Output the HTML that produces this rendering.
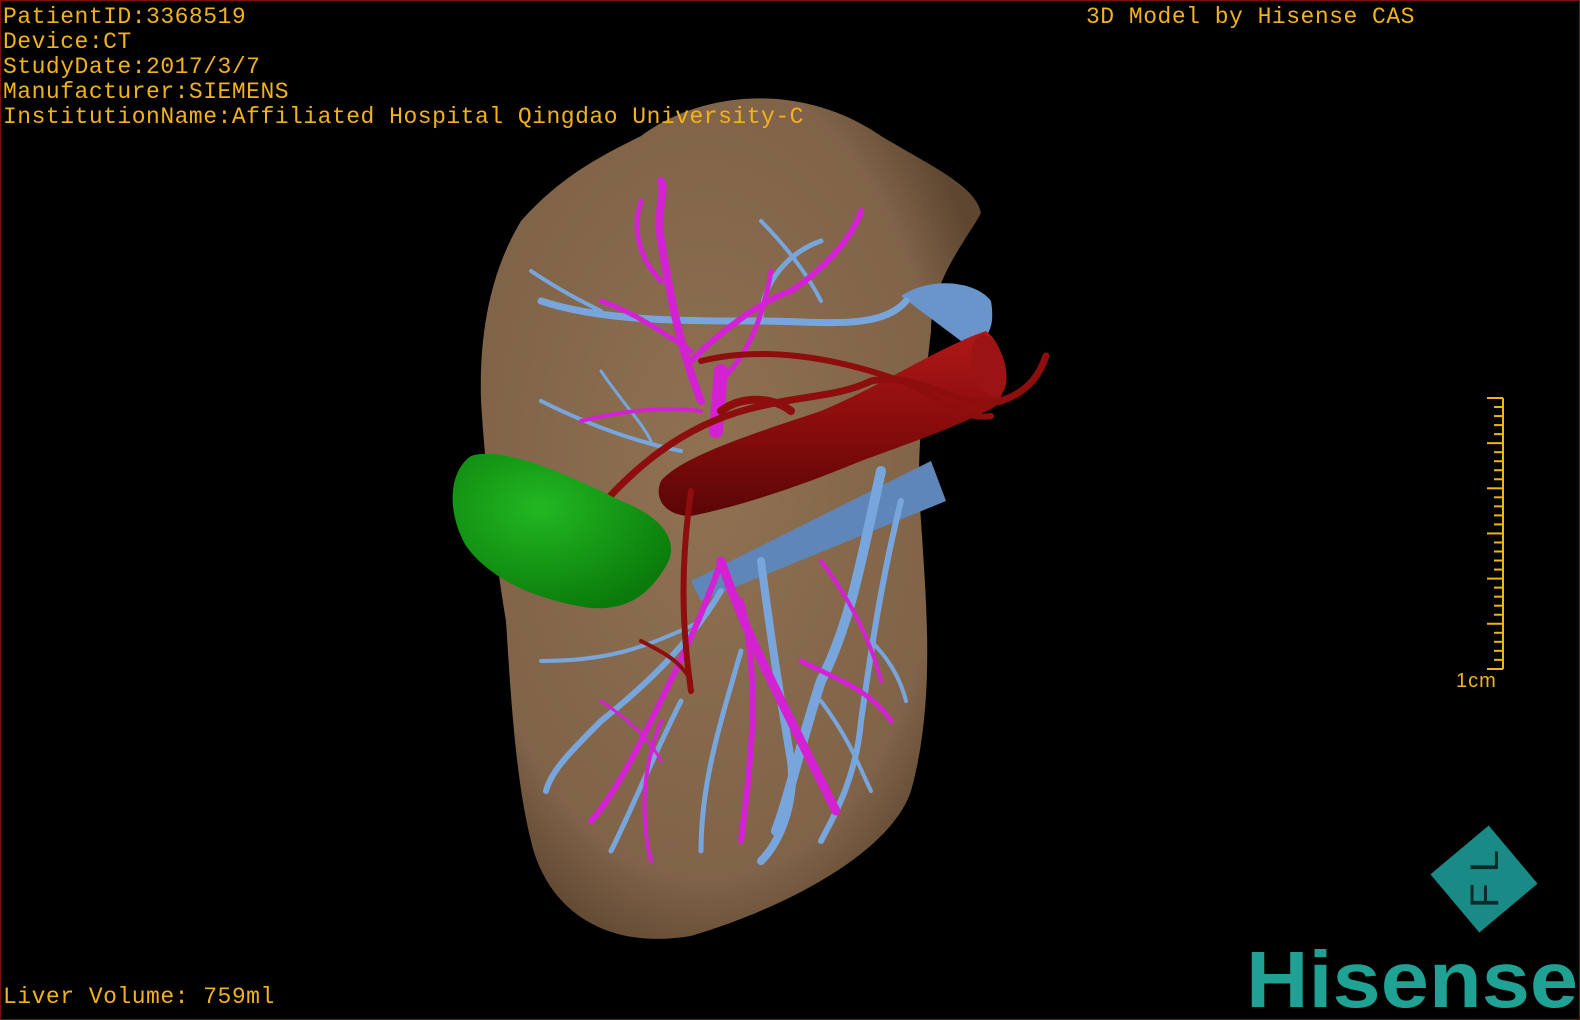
<!DOCTYPE html>
<html><head><meta charset="utf-8"><style>
html,body{margin:0;padding:0;background:#000;}
#f{position:relative;width:1580px;height:1020px;background:#000;overflow:hidden;box-sizing:border-box;border:1px solid #7a1010;}
.t{position:absolute;color:#f2b21c;font-family:"Liberation Mono",monospace;font-size:23px;line-height:25px;white-space:pre;letter-spacing:0.5px;}
</style></head><body><div id="f">
<svg width="1580" height="1020" style="position:absolute;left:0;top:0">
<defs>
<radialGradient id="lv" cx="0.45" cy="0.45" r="0.6"><stop offset="0" stop-color="#8f7252"/><stop offset="0.8" stop-color="#806348"/><stop offset="1" stop-color="#5e4630"/></radialGradient>
<linearGradient id="ivc" x1="0" y1="0" x2="0" y2="1"><stop offset="0" stop-color="#b01818"/><stop offset="0.5" stop-color="#8a0c0c"/><stop offset="1" stop-color="#5a0606"/></linearGradient>
<radialGradient id="gb" cx="0.4" cy="0.35" r="0.7"><stop offset="0" stop-color="#22b822"/><stop offset="1" stop-color="#0a7a0a"/></radialGradient>
</defs>
<path d="M640 135 C700 90 800 80 880 135 C930 165 975 185 980 212 C965 240 930 280 930 330 C920 420 915 460 920 520 C925 600 935 700 910 790 C890 850 790 905 690 935 C600 950 545 905 530 840 C515 780 510 700 505 620 C495 560 485 480 480 400 C478 330 490 270 520 220 C560 175 600 155 640 135 Z" fill="url(#lv)"/>
<path d="M690 580 L930 460 L945 500 L700 600 Z" fill="#5f86b8"/>
<path d="M900 295 C930 275 975 280 990 300 C995 330 985 345 960 340 Z" fill="#6a94cc"/>
<g fill="none" stroke="#78a6dc" stroke-linecap="round">
<path d="M540 300 C600 320 680 320 760 320 C820 320 880 330 905 300" stroke-width="7"/>
<path d="M760 320 C760 280 790 250 820 240" stroke-width="5"/>
<path d="M760 220 C790 250 810 280 820 300" stroke-width="4"/>
<path d="M530 270 C560 290 580 300 600 310" stroke-width="4"/>
<path d="M540 400 C580 420 630 440 680 450" stroke-width="4"/>
<path d="M600 370 C620 400 640 420 650 440" stroke-width="3"/>
<path d="M880 470 C860 560 850 620 820 680 C800 740 790 790 775 830" stroke-width="10"/>
<path d="M900 500 C880 580 870 650 860 720 C855 780 830 820 820 840" stroke-width="6"/>
<path d="M760 560 C770 640 780 700 790 760 C795 800 780 840 760 860" stroke-width="8"/>
<path d="M720 590 C690 640 650 680 600 720 C570 750 550 770 545 790" stroke-width="6"/>
<path d="M700 620 C640 650 600 660 540 660" stroke-width="4"/>
<path d="M680 700 C650 760 630 810 610 850" stroke-width="5"/>
<path d="M740 650 C720 720 700 780 700 850" stroke-width="5"/>
<path d="M870 640 C890 660 900 680 905 700" stroke-width="4"/>
<path d="M820 700 C850 740 860 770 870 790" stroke-width="4"/>
</g>
<g fill="none" stroke="#d421d4" stroke-linecap="round">
<path d="M700 400 C680 350 670 300 660 240 C655 210 665 190 660 180" stroke-width="8"/>
<path d="M660 280 C640 260 630 230 640 200" stroke-width="5"/>
<path d="M690 360 C720 330 760 300 790 290 C820 270 850 240 860 210" stroke-width="6"/>
<path d="M600 300 C630 310 660 330 690 350" stroke-width="5"/>
<path d="M720 380 C740 360 760 330 770 270" stroke-width="5"/>
<path d="M720 370 L715 430" stroke-width="14"/>
<path d="M580 420 C620 410 660 405 700 410" stroke-width="4"/>
<path d="M720 560 C740 620 770 680 800 740 C820 780 830 800 835 810" stroke-width="9"/>
<path d="M720 560 C700 620 670 680 640 740 C620 780 600 810 590 820" stroke-width="6"/>
<path d="M740 600 C760 680 750 760 740 840" stroke-width="6"/>
<path d="M800 660 C840 680 870 690 890 720" stroke-width="5"/>
<path d="M820 560 C850 600 870 640 880 680" stroke-width="4"/>
<path d="M660 720 C640 770 640 820 650 860" stroke-width="4"/>
<path d="M600 700 C630 720 650 740 660 760" stroke-width="3"/>
</g>
<path d="M660 480 C680 455 760 430 820 410 C880 385 940 345 985 330 C1005 345 1010 385 995 405 C960 425 900 445 860 460 C800 485 740 505 690 515 C665 515 652 498 660 480 Z" fill="url(#ivc)"/>
<ellipse cx="988" cy="365" rx="16" ry="32" fill="#9a1414" transform="rotate(-15 988 365)"/>
<g fill="none" stroke="#8e0e0e" stroke-linecap="round">
<path d="M600 505 C640 460 690 420 760 405 C800 395 840 395 870 380 C920 370 960 410 1000 400 C1030 390 1040 370 1045 355" stroke-width="7"/>
<path d="M700 360 C760 345 830 355 900 380 C940 395 960 420 990 415" stroke-width="6"/>
<path d="M690 490 C680 560 680 620 690 690" stroke-width="6"/>
<path d="M640 640 C660 650 680 660 690 680" stroke-width="4"/>
<path d="M720 410 C740 395 770 395 790 410" stroke-width="8"/>
</g>
<path d="M470 455 C500 445 560 470 620 500 C660 515 680 540 665 565 C650 590 630 610 590 607 C540 600 490 580 465 545 C445 510 448 470 470 455 Z" fill="url(#gb)"/>
<g stroke="#f2b21c" stroke-width="2">
<line x1="1502" y1="397" x2="1502" y2="668"/>
<line x1="1486" y1="397" x2="1502" y2="397"/>
<line x1="1486" y1="668" x2="1502" y2="668"/>
</g>
<g stroke="#f2b21c" stroke-width="2" id="ticks"></g>
<g transform="translate(1483 878) rotate(-40)">
<rect x="-38" y="-38" width="76" height="76" fill="#1a8a87"/>
<text x="0" y="14" text-anchor="middle" font-family="Liberation Sans,sans-serif" font-size="40" fill="#0a2b2a" transform="rotate(-50)">F L</text>
</g>
<text x="1245" y="1006" font-family="Liberation Sans,sans-serif" font-weight="bold" font-size="80" fill="#1fa194" textLength="332" lengthAdjust="spacingAndGlyphs">Hisense</text>
</svg>
<div class="t" style="left:2px;top:4px">PatientID:3368519
Device:CT
StudyDate:2017/3/7
Manufacturer:SIEMENS
InstitutionName:Affiliated Hospital Qingdao University-C</div>
<div class="t" style="left:1085px;top:4px">3D Model by Hisense CAS</div>
<div class="t" style="left:2px;top:984px">Liver Volume: 759ml</div>
<div class="t" style="left:1455px;top:668px;font-family:'Liberation Sans',sans-serif;font-size:20px;letter-spacing:1px">1cm</div>
</div>
<script>
var g=document.getElementById('ticks');var s='';
for(var i=1;i<30;i++){var y=397+i*9.03;var l=(i%5==0)?16:9;s+='<line x1="'+(1502-l)+'" y1="'+y+'" x2="1502" y2="'+y+'"/>';}
g.innerHTML=s;
</script>
</body></html>
